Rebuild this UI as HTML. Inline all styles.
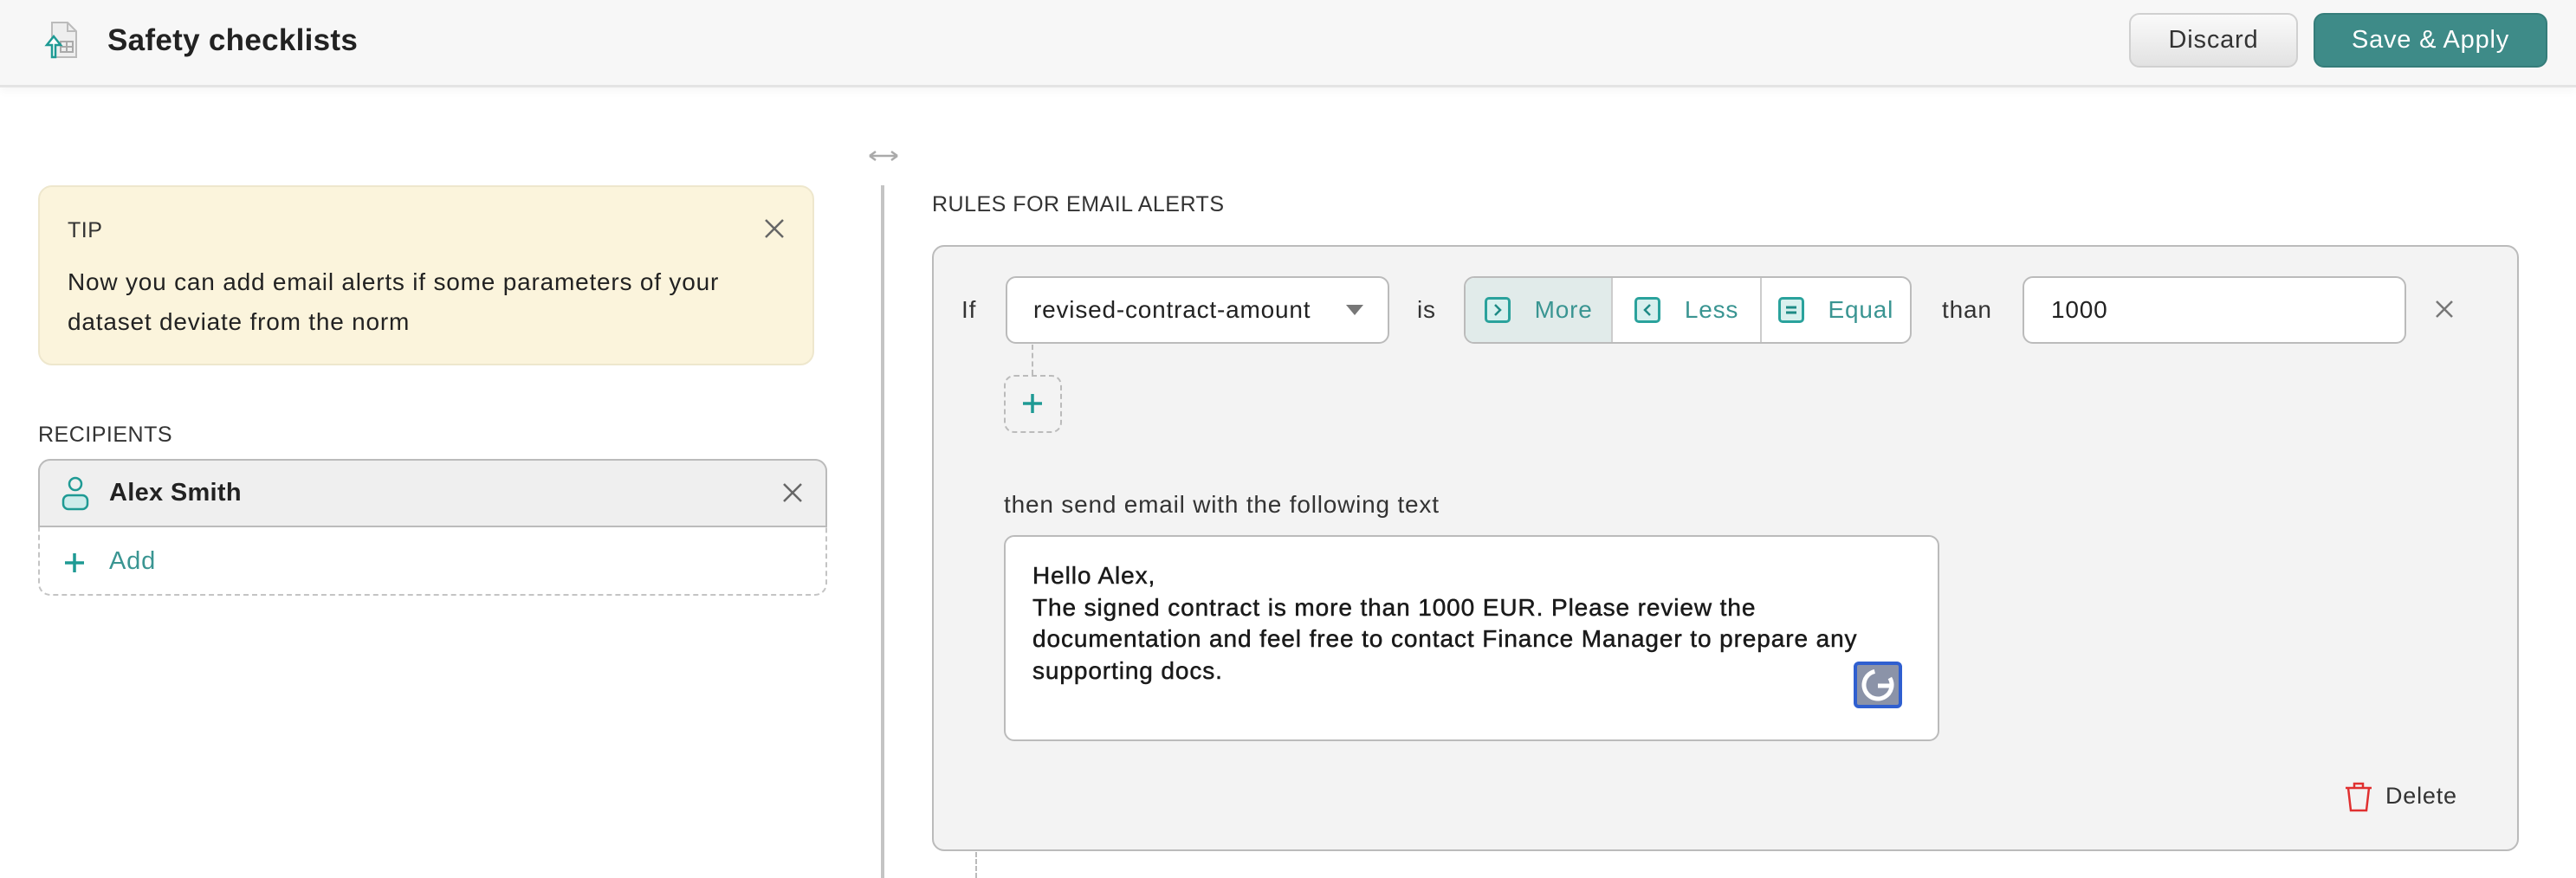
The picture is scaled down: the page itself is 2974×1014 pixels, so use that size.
<!DOCTYPE html>
<html><head><meta charset="utf-8"><style>
*{box-sizing:border-box;margin:0;padding:0}
body{width:2974px;height:1006px;overflow:hidden;background:#fff;font-family:"Liberation Sans","DejaVu Sans",sans-serif;color:#222;position:relative;letter-spacing:.8px}
.a{position:absolute}
.hdr{left:0;top:0;width:2974px;height:101px;background:#f7f7f7;border-bottom:3px solid #e4e4e4;box-shadow:0 4px 10px rgba(0,0,0,.04)}
.btn{top:15px;height:63px;border-radius:12px;font-size:29px;display:flex;align-items:center;justify-content:center}
.lbl{font-size:25px;color:#333;letter-spacing:.5px}
.seg{display:flex;align-items:center;justify-content:center;gap:28px;color:#3a9592;font-size:28px;height:100%}
.sq{width:30px;height:30px;border:3px solid #2aa29c;border-radius:5px;display:flex;align-items:center;justify-content:center;background:#d8f0ee}
</style></head><body>
<div class="a hdr"></div>
<svg class="a" style="left:50px;top:24px" width="42" height="44" viewBox="0 0 42 44"><path d="M10 2h18l10 10v30H10z" fill="#eee" stroke="#bbb" stroke-width="2"/><path d="M28 2v10h10" fill="none" stroke="#bbb" stroke-width="2"/><rect x="20" y="24" width="14" height="12" fill="none" stroke="#aaa" stroke-width="2"/><path d="M27 24v12M20 30h14" stroke="#aaa" stroke-width="2"/><path d="M10 42V28H4l8-10 8 10h-6v14z" fill="#fff" stroke="#1e9a94" stroke-width="2.5"/></svg>
<div class="a" style="left:124px;top:27px;font-size:35px;font-weight:bold;color:#222;letter-spacing:.3px">Safety checklists</div>
<div class="a btn" style="left:2458px;width:195px;background:linear-gradient(#fafafa,#e2e2e2);border:2px solid #d0d0d0;color:#333">Discard</div>
<div class="a btn" style="left:2671px;width:270px;background:#3e8b88;border:2px solid #357d7a;color:#fff">Save &amp; Apply</div>

<svg class="a" style="left:1000px;top:172px" width="40" height="16"><path d="M4 8h32M4 8l7-5M4 8l7 5M36 8l-7-5M36 8l-7 5" stroke="#aaa" stroke-width="2.5" fill="none"/></svg>
<div class="a" style="left:1017px;top:214px;width:4px;height:800px;background:#c4c4c4"></div>

<div class="a" style="left:44px;top:214px;width:896px;height:208px;background:#fbf4dc;border:2px solid #eee7cd;border-radius:16px"></div>
<div class="a lbl" style="left:78px;top:252px">TIP</div>
<svg class="a" style="left:882px;top:252px" width="24" height="24"><path d="M2 2l20 20M22 2L2 22" stroke="#666" stroke-width="2.5"/></svg>
<div class="a" style="left:78px;top:303px;font-size:28px;line-height:46px;color:#222">Now you can add email alerts if some parameters of your<br>dataset deviate from the norm</div>

<div class="a lbl" style="left:44px;top:488px">RECIPIENTS</div>
<div class="a" style="left:44px;top:530px;width:911px;height:158px;border:2px dashed #c4c4c4;border-radius:14px"></div>
<div class="a" style="left:44px;top:530px;width:911px;height:79px;background:#efefef;border:2px solid #bbb;border-radius:14px 14px 0 0"></div>
<svg class="a" style="left:70px;top:550px" width="34" height="40"><circle cx="17" cy="9" r="7" fill="none" stroke="#1e9a94" stroke-width="2.5"/><rect x="3" y="22" width="28" height="16" rx="6" fill="#cdeceb" stroke="#1e9a94" stroke-width="2.5"/></svg>
<div class="a" style="left:126px;top:553px;font-size:29px;font-weight:bold;color:#222;letter-spacing:.3px">Alex Smith</div>
<svg class="a" style="left:903px;top:557px" width="24" height="24"><path d="M2 2l20 20M22 2L2 22" stroke="#666" stroke-width="2.5"/></svg>
<svg class="a" style="left:74px;top:638px" width="24" height="24"><path d="M12 1v22M1 12h22" stroke="#1e9a94" stroke-width="3.5"/></svg>
<div class="a" style="left:126px;top:632px;font-size:29px;color:#3a9592">Add</div>

<div class="a lbl" style="left:1076px;top:222px">RULES FOR EMAIL ALERTS</div>
<div class="a" style="left:1076px;top:283px;width:1832px;height:700px;background:#f3f3f3;border:2px solid #bbb;border-radius:14px"></div>
<div class="a" style="left:1126px;top:984px;height:30px;border-left:2px dashed #bbb"></div>
<div class="a" style="left:1110px;top:342px;font-size:28px;color:#333">If</div>
<div class="a" style="left:1161px;top:319px;width:443px;height:78px;background:#fff;border:2px solid #bbb;border-radius:12px"></div>
<div class="a" style="left:1193px;top:342px;width:330px;overflow:hidden;white-space:nowrap;font-size:28px;color:#222">revised-contract-amount</div>
<svg class="a" style="left:1553px;top:351px" width="22" height="14"><path d="M1 1h20L11 13z" fill="#777"/></svg>
<div class="a" style="left:1636px;top:342px;font-size:28px;color:#333">is</div>
<div class="a" style="left:1690px;top:319px;width:517px;height:78px;background:#fff;border:2px solid #bbb;border-radius:12px;display:flex;overflow:hidden">
 <div class="seg" style="width:171px;background:#e1ebea;border-right:2px solid #ccc"><div class="sq"><svg width="14" height="16"><path d="M4 2l6 6-6 6" stroke="#1e8a85" stroke-width="2.5" fill="none"/></svg></div>More</div>
 <div class="seg" style="width:172px;border-right:2px solid #ccc"><div class="sq"><svg width="14" height="16"><path d="M10 2L4 8l6 6" stroke="#1e8a85" stroke-width="2.5" fill="none"/></svg></div>Less</div>
 <div class="seg" style="width:172px"><div class="sq"><svg width="16" height="14"><path d="M2 4h12M2 10h12" stroke="#1e8a85" stroke-width="3"/></svg></div>Equal</div>
</div>
<div class="a" style="left:2242px;top:342px;font-size:28px;color:#333">than</div>
<div class="a" style="left:2335px;top:319px;width:443px;height:78px;background:#fff;border:2px solid #bbb;border-radius:12px"></div>
<div class="a" style="left:2368px;top:342px;font-size:28px;color:#222">1000</div>
<svg class="a" style="left:2811px;top:346px" width="22" height="22"><path d="M2 2l18 18M20 2L2 20" stroke="#777" stroke-width="2.5"/></svg>
<div class="a" style="left:1191px;top:398px;height:35px;border-left:2px dashed #bbb"></div>
<div class="a" style="left:1159px;top:433px;width:67px;height:67px;border:2px dashed #bbb;border-radius:12px"></div>
<svg class="a" style="left:1181px;top:455px" width="22" height="22"><path d="M11 0v22M0 11h22" stroke="#1e9a94" stroke-width="3.5"/></svg>
<div class="a" style="left:1159px;top:567px;font-size:28px;color:#333">then send email with the following text</div>
<div class="a" style="left:1159px;top:618px;width:1080px;height:238px;background:#fff;border:2px solid #bbb;border-radius:12px"></div>
<div class="a" style="left:1192px;top:647px;font-size:28px;line-height:36.5px;color:#1a1a1a;letter-spacing:.9px;-webkit-text-stroke:.5px #1a1a1a">Hello Alex,<br>The signed contract is more than 1000 EUR. Please review the<br>documentation and feel free to contact Finance Manager to prepare any<br>supporting docs.</div>
<div class="a" style="left:2140px;top:764px;width:56px;height:54px;border:4px solid #2f5fd0;border-radius:6px;background:#8b93a8;display:flex;align-items:center;justify-content:center"><svg width="40" height="40"><circle cx="20" cy="20" r="16" fill="none" stroke="#fff" stroke-width="5" stroke-dasharray="80 21" transform="rotate(-30 20 20)"/><path d="M20 21h14" stroke="#fff" stroke-width="5"/></svg></div>
<svg class="a" style="left:2706px;top:902px" width="34" height="36"><path d="M2 8h30M12 8V3h10v5M5 8l3 26h18l3-26" fill="none" stroke="#e03030" stroke-width="2.5"/></svg>
<div class="a" style="left:2754px;top:904px;font-size:27px;color:#333">Delete</div>
</body></html>
